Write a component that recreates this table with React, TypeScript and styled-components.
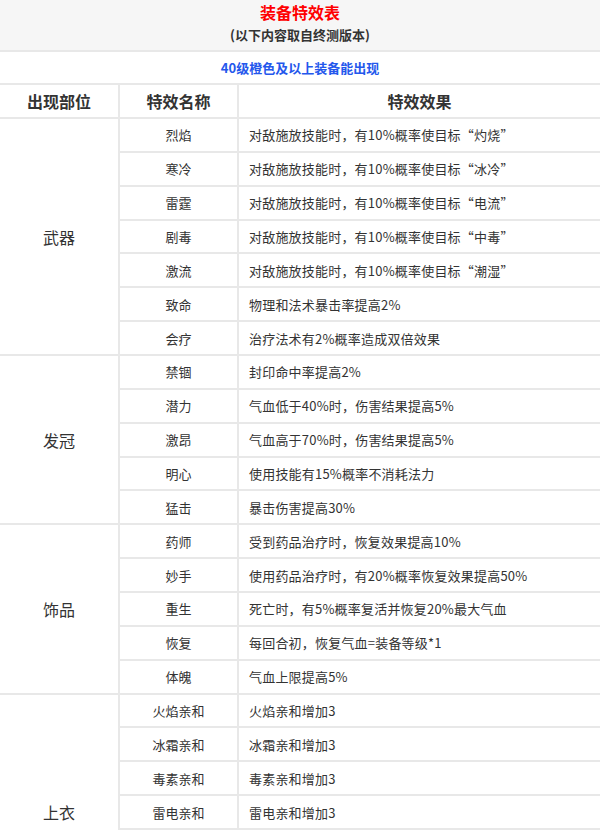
import React from "react";
import styled, { createGlobalStyle } from "styled-components";

const Global = createGlobalStyle`
  html, body { margin: 0; padding: 0; background: #fff; }
  body { font-family: "Noto Sans CJK SC", "Noto Sans", sans-serif; color: #333; }
`;

const Table = styled.table`
  width: 600px;
  border-collapse: collapse;
  table-layout: fixed;
  font-family: "Noto Sans CJK SC", "Noto Sans", sans-serif;
`;

const Cell = styled.td`
  border: 2px solid #e8e8e8;
  padding: 0;
  color: #333;
  &:first-child { border-left: none; }
  &:last-child { border-right: none; }
`;

const TitleCell = styled(Cell)`
  border-top: none;
  background: #f6f6f6;
  text-align: center;
  height: 50px;
  vertical-align: top;
`;

const Title = styled.div`
  color: #ff0000;
  font-size: 16px;
  font-weight: 700;
  line-height: 24px;
`;

const Subtitle = styled.div`
  color: #333;
  font-size: 13px;
  font-weight: 700;
  line-height: 22px;
`;

const NoteCell = styled(Cell)`
  text-align: center;
  color: #2457ec;
  font-size: 13px;
  font-weight: 700;
  height: 31px;
`;

const HeadCell = styled.th`
  border: 2px solid #e8e8e8;
  padding: 0;
  height: 32px;
  font-size: 16px;
  font-weight: 700;
  color: #333;
  text-align: center;
  &:first-child { border-left: none; }
  &:last-child { border-right: none; }
`;

const Row = styled.tr`
  height: 33.86px;
`;

const GroupCell = styled(Cell)`
  text-align: center;
  font-size: 16px;
`;

const NameCell = styled(Cell)`
  text-align: center;
  font-size: 13px;
`;

const EffectCell = styled(Cell)`
  text-align: left;
  font-size: 13px;
  padding-left: 10px;
  letter-spacing: 0.2px;
`;

type Group = { part: string; rows: [string, string][] };

const groups: Group[] = [
  {
    part: "武器",
    rows: [
      ["烈焰", "对敌施放技能时，有10%概率使目标“灼烧”"],
      ["寒冷", "对敌施放技能时，有10%概率使目标“冰冷”"],
      ["雷霆", "对敌施放技能时，有10%概率使目标“电流”"],
      ["剧毒", "对敌施放技能时，有10%概率使目标“中毒”"],
      ["激流", "对敌施放技能时，有10%概率使目标“潮湿”"],
      ["致命", "物理和法术暴击率提高2%"],
      ["会疗", "治疗法术有2%概率造成双倍效果"],
    ],
  },
  {
    part: "发冠",
    rows: [
      ["禁锢", "封印命中率提高2%"],
      ["潜力", "气血低于40%时，伤害结果提高5%"],
      ["激昂", "气血高于70%时，伤害结果提高5%"],
      ["明心", "使用技能有15%概率不消耗法力"],
      ["猛击", "暴击伤害提高30%"],
    ],
  },
  {
    part: "饰品",
    rows: [
      ["药师", "受到药品治疗时，恢复效果提高10%"],
      ["妙手", "使用药品治疗时，有20%概率恢复效果提高50%"],
      ["重生", "死亡时，有5%概率复活并恢复20%最大气血"],
      ["恢复", "每回合初，恢复气血=装备等级*1"],
      ["体魄", "气血上限提高5%"],
    ],
  },
  {
    part: "上衣",
    rows: [
      ["火焰亲和", "火焰亲和增加3"],
      ["冰霜亲和", "冰霜亲和增加3"],
      ["毒素亲和", "毒素亲和增加3"],
      ["雷电亲和", "雷电亲和增加3"],
      ["流水亲和", "流水亲和增加3"],
      ["坚韧", "物理伤害减免2%"],
      ["庇护", "法术伤害减免2%"],
    ],
  },
];

export default function App() {
  return (
    <>
      <Global />
      <Table>
        <colgroup>
          <col style={{ width: 119 }} />
          <col style={{ width: 119 }} />
          <col />
        </colgroup>
        <tbody>
          <tr>
            <TitleCell colSpan={3}>
              <Title>装备特效表</Title>
              <Subtitle>(以下内容取自终测版本)</Subtitle>
            </TitleCell>
          </tr>
          <tr>
            <NoteCell colSpan={3}>40级橙色及以上装备能出现</NoteCell>
          </tr>
          <tr>
            <HeadCell>出现部位</HeadCell>
            <HeadCell>特效名称</HeadCell>
            <HeadCell>特效效果</HeadCell>
          </tr>
          {groups.map((g) =>
            g.rows.map(([name, effect], i) => (
              <Row key={g.part + name}>
                {i === 0 && <GroupCell rowSpan={g.rows.length}>{g.part}</GroupCell>}
                <NameCell>{name}</NameCell>
                <EffectCell>{effect}</EffectCell>
              </Row>
            ))
          )}
        </tbody>
      </Table>
    </>
  );
}
